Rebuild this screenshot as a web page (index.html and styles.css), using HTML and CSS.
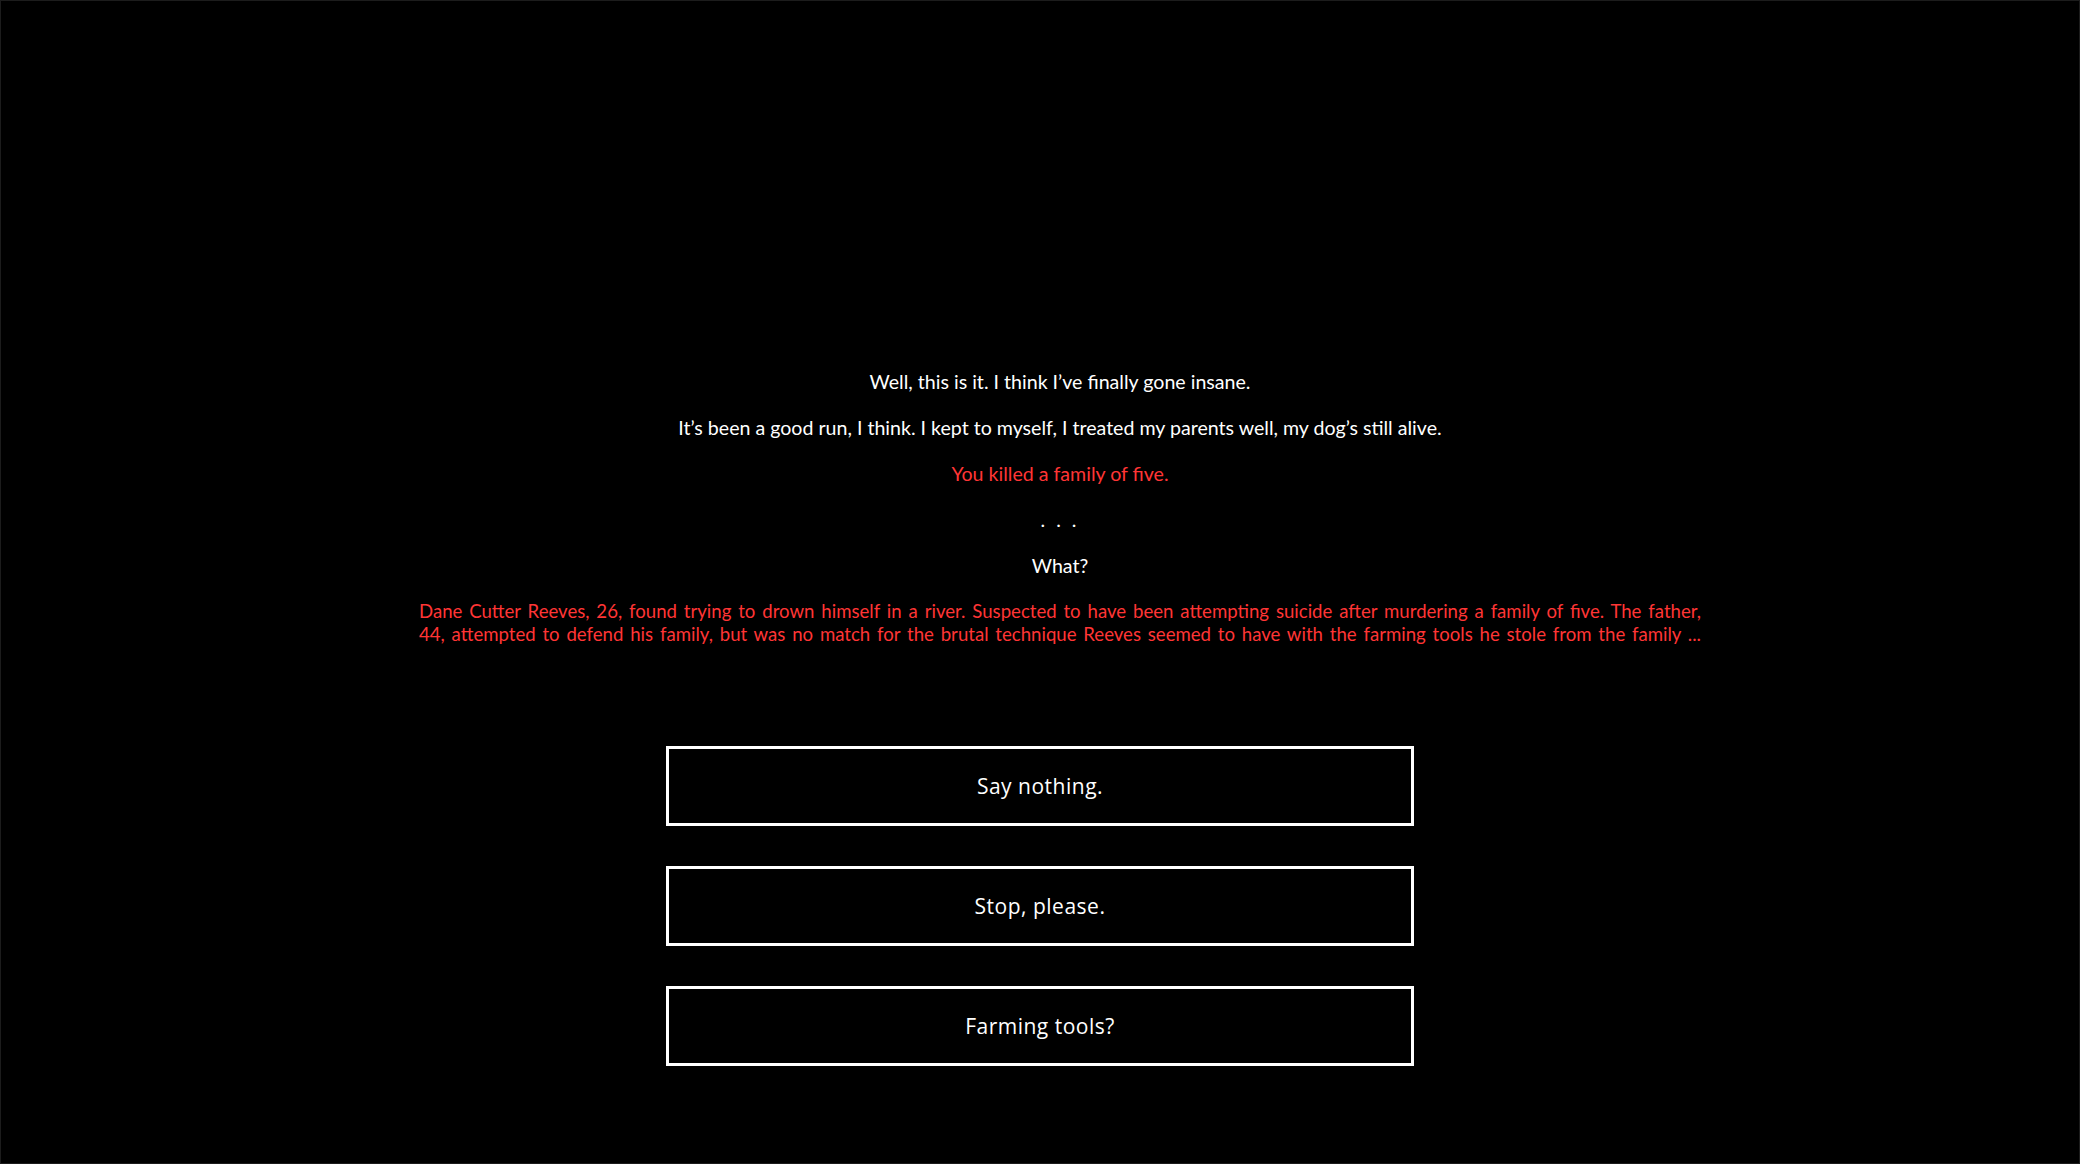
FILE: index.html
```html
<!DOCTYPE html>
<html lang="en">
<head>
<meta charset="utf-8">
<title>Story</title>
<link rel="stylesheet" href="styles.css">
</head>
<body>
<main class="screen">
  <section class="story">
    <p class="line">Well, this is it. I think I’ve finally gone insane.</p>
    <p class="line">It’s been a good run, I think. I kept to myself, I treated my parents well, my dog’s still alive.</p>
    <p class="line red">You killed a family of five.</p>
    <p class="line dots">. . .</p>
    <p class="line">What?</p>
    <p class="line red report">Dane Cutter Reeves, 26, found trying to drown himself in a river. Suspected to have been attempting suicide after murdering a family of five. The father,<br>44, attempted to defend his family, but was no match for the brutal technique Reeves seemed to have with the farming tools he stole from the family ...</p>
  </section>
  <nav class="choices">
    <button class="choice">Say nothing.</button>
    <button class="choice">Stop, please.</button>
    <button class="choice">Farming tools?</button>
  </nav>
</main>
</body>
</html>
```
FILE: styles.css
```css
html, body {
  margin: 0;
  padding: 0;
  background: #000;
}
body {
  height: 100vh;
  box-sizing: border-box;
  border: 1px solid #1c1c1c;
}
.screen {
  display: flex;
  flex-direction: column;
  align-items: center;
  padding-top: 369px;
}
.story {
  width: 1282px;
  padding-left: 40px;
  text-align: center;
  font-family: Lato, "Liberation Sans", sans-serif;
  font-size: 19.6px;
  line-height: 23px;
  color: #fff;
}
.line {
  margin: 0 0 23px 0;
}
.line:last-child {
  margin-bottom: 0;
}
.red {
  color: #ff3535;
}
.report {
  font-size: 18.6px;
  text-align: justify;
  text-align-last: justify;
}
.dots {
  letter-spacing: 3px;
}
.choices {
  display: flex;
  flex-direction: column;
  gap: 40px;
  margin-top: 100px;
}
.choice {
  width: 748px;
  height: 80px;
  box-sizing: border-box;
  background: #000;
  border: 3px solid #fff;
  color: #fff;
  font-family: "Open Sans", "DejaVu Sans", sans-serif;
  font-size: 21px;
  letter-spacing: 0.5px;
  cursor: pointer;
}
```
